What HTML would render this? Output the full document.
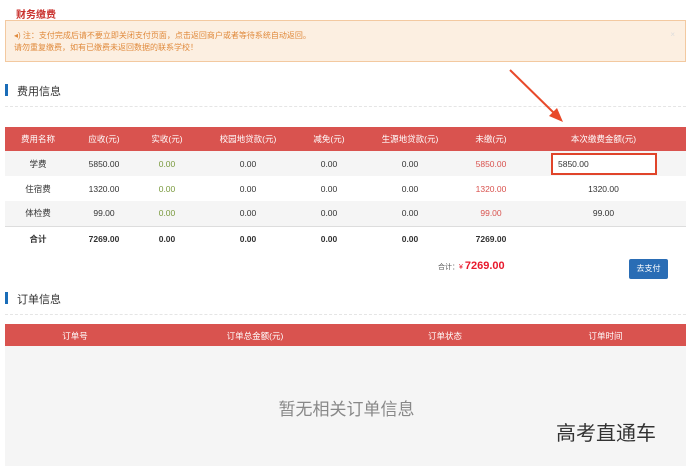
<!DOCTYPE html><html><head><meta charset="utf-8"><style>
*{margin:0;padding:0;box-sizing:border-box}
body{width:693px;height:469px;background:#fff;font-family:"Liberation Sans","Noto Sans CJK SC",sans-serif;position:relative;overflow:hidden;color:#333}
.a{position:absolute}
table{border-collapse:collapse;position:absolute;left:5px;width:681px;font-size:8.5px;text-align:center}
th{background:#d9534f;color:#fff;font-weight:normal;height:24px}
td{height:25px}
tr.g td{background:#f5f5f5}
.gr{color:#7a9a3e}.rd{color:#d9534f}
</style></head><body>
<div class="a" style="left:16px;top:6px;font-size:10px;color:#c9302c;font-weight:bold">财务缴费</div>
<div class="a" style="left:5px;top:20px;width:681px;height:42px;background:#fcefe1;border:1px solid #f3c9a0;font-size:8px;color:#e08a3c;padding:9px 0 0 8px;line-height:12px">◂) 注：支付完成后请不要立即关闭支付页面，点击返回商户或者等待系统自动返回。<br>请勿重复缴费，如有已缴费未返回数据的联系学校！<span class="a" style="right:10px;top:8px;color:#ddd">×</span></div>
<div class="a" style="left:5px;top:84px;width:3px;height:12px;background:#1a6db8"></div>
<div class="a" style="left:17px;top:83px;font-size:11px">费用信息</div>
<div class="a" style="left:5px;top:106px;width:681px;border-top:1px dashed #e5e5e5"></div>
<svg class="a" style="left:505px;top:66px" width="70" height="60"><line x1="5" y1="4" x2="50" y2="48" stroke="#e8492a" stroke-width="2"/><polygon points="58,56 44,50 52,42" fill="#e8492a"/></svg>
<table style="top:127px">
<tr><th style="width:66px">费用名称</th><th style="width:66px">应收(元)</th><th style="width:60px">实收(元)</th><th style="width:102px">校园地贷款(元)</th><th style="width:60px">减免(元)</th><th style="width:102px">生源地贷款(元)</th><th style="width:60px">未缴(元)</th><th>本次缴费金额(元)</th></tr>
<tr class="g"><td>学费</td><td>5850.00</td><td class="gr">0.00</td><td>0.00</td><td>0.00</td><td>0.00</td><td class="rd">5850.00</td><td style="text-align:left;padding-left:30px"><div style="width:106px;height:22px;border:2px solid #e0442a;background:#fff;padding:4px 0 0 5px">5850.00</div></td></tr>
<tr><td>住宿费</td><td>1320.00</td><td class="gr">0.00</td><td>0.00</td><td>0.00</td><td>0.00</td><td class="rd">1320.00</td><td>1320.00</td></tr>
<tr class="g"><td>体检费</td><td>99.00</td><td class="gr">0.00</td><td>0.00</td><td>0.00</td><td>0.00</td><td class="rd">99.00</td><td>99.00</td></tr>
<tr style="font-weight:bold;border-top:1px solid #ddd"><td>合计</td><td>7269.00</td><td>0.00</td><td>0.00</td><td>0.00</td><td>0.00</td><td>7269.00</td><td></td></tr>
</table>
<div class="a" style="left:438px;top:260px;font-size:7px;color:#555">合计：<span style="color:#e8192c">¥ <b style="font-size:11px">7269.00</b></span></div>
<div class="a" style="left:629px;top:259px;width:39px;height:20px;background:#2a6db5;border-radius:2px;color:#fff;font-size:8px;text-align:center;line-height:20px">去支付</div>
<div class="a" style="left:5px;top:292px;width:3px;height:12px;background:#1a6db8"></div>
<div class="a" style="left:17px;top:291px;font-size:11px">订单信息</div>
<div class="a" style="left:5px;top:314px;width:681px;border-top:1px dashed #e5e5e5"></div>
<table style="top:324px"><tr><th style="width:140px;height:22px">订单号</th><th style="width:220px">订单总金额(元)</th><th style="width:160px">订单状态</th><th>订单时间</th></tr></table>
<div class="a" style="left:5px;top:346px;width:681px;height:120px;background:#f5f5f5"></div>
<div class="a" style="left:0;width:693px;top:395px;text-align:center;font-size:17px;color:#888">暂无相关订单信息</div>
<div class="a" style="left:556px;top:417px;font-size:20px;color:#333">高考直通车</div>
</body></html>
